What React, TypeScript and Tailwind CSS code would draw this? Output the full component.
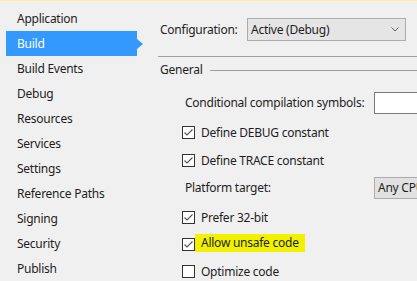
import React from "react";

const navItems = [
  "Application",
  "Build",
  "Build Events",
  "Debug",
  "Resources",
  "Services",
  "Settings",
  "Reference Paths",
  "Signing",
  "Security",
  "Publish",
];

function CheckBox({ checked }: { checked: boolean }) {
  return (
    <div className="w-[13px] h-[13px] border border-[#333333] bg-white flex items-center justify-center shrink-0">
      {checked && (
        <svg width="11" height="11" viewBox="0 0 11 11">
          <path d="M1.5 5.5 L4 8 L9.5 2.5" fill="none" stroke="#555555" strokeWidth="1.1" />
        </svg>
      )}
    </div>
  );
}

function CheckRow({ label, checked, mark, className }: { label: string; checked: boolean; mark?: boolean; className: string }) {
  return (
    <div className={`flex items-center h-[13px] pl-[24px] ${className}`}>
      <CheckBox checked={checked} />
      <span className={`px-[6px] h-[18px] leading-[18px] whitespace-nowrap ${mark ? "bg-[#f2f200] -mt-[3px]" : ""}`}>{label}</span>
    </div>
  );
}

export default function App() {
  return (
    <div
      className="w-[417px] h-[281px] overflow-hidden bg-[#f0f0f0] border-t border-[#fdee9f] flex text-[12px] tracking-[-0.25px] text-[#1e1e1e]"
      style={{ fontFamily: '"Segoe UI", "Noto Sans", sans-serif' }}
    >
      {/* Left nav */}
      <div className="w-[158px] shrink-0 pt-[5px] flex flex-col">
        {navItems.map((item) =>
          item === "Build" ? (
            <div key={item} className="flex items-center h-[25px] pl-[6px]">
              <div className="w-[131px] h-[25px] bg-[#3399ff] text-white pl-[11px] flex items-center">{item}</div>
              <div className="w-0 h-0 border-y-[5px] border-y-transparent border-l-[6px] border-l-[#3399ff]" />
            </div>
          ) : (
            <div key={item} className="h-[25px] pl-[17px] flex items-center whitespace-nowrap">
              {item}
            </div>
          )
        )}
      </div>

      {/* Right panel */}
      <div className="flex-1 flex flex-col min-w-0">
        <div className="mt-[17px] h-[23px] flex items-center pl-[2px]">
          <span className="w-[87px] shrink-0">Configuration:</span>
          <div className="w-[159px] h-[23px] shrink-0 border border-[#acacac] bg-[#e5e5e5] flex items-center pl-[3px] pr-[6px] justify-between">
            <span>Active (Debug)</span>
            <svg width="8" height="5" viewBox="0 0 8 5">
              <path d="M0.5 0.5 L4 4 L7.5 0.5" fill="none" stroke="#606060" strokeWidth="1" />
            </svg>
          </div>
        </div>

        <div className="mt-[15px] h-px bg-[#a0a0a0]" />

        <div className="mt-[5px] h-[16px] flex items-center pl-[2px]">
          <span>General</span>
          <div className="flex-1 h-px bg-[#a0a0a0] ml-[8px]" />
        </div>

        <div className="mt-[14px] h-[22px] flex items-center pl-[27px]">
          <span className="w-[189px] shrink-0 whitespace-nowrap">Conditional compilation symbols:</span>
          <div className="w-[60px] h-[22px] border border-[#7a7a7a] bg-white shrink-0" />
        </div>

        <CheckRow label="Define DEBUG constant" checked className="mt-[12px]" />
        <CheckRow label="Define TRACE constant" checked className="mt-[15px]" />

        <div className="mt-[10px] h-[22px] flex items-center pl-[27px]">
          <span className="w-[189px] shrink-0 whitespace-nowrap">Platform target:</span>
          <div className="w-[80px] h-[22px] border border-[#adadad] bg-[#e1e1e1] shrink-0 pl-[3px] flex items-center whitespace-nowrap">
            Any CPU
          </div>
        </div>

        <CheckRow label="Prefer 32-bit" checked className="mt-[12px]" />
        <CheckRow label="Allow unsafe code" checked mark className="mt-[14px]" />
        <CheckRow label="Optimize code" checked={false} className="mt-[14px]" />
      </div>
    </div>
  );
}
